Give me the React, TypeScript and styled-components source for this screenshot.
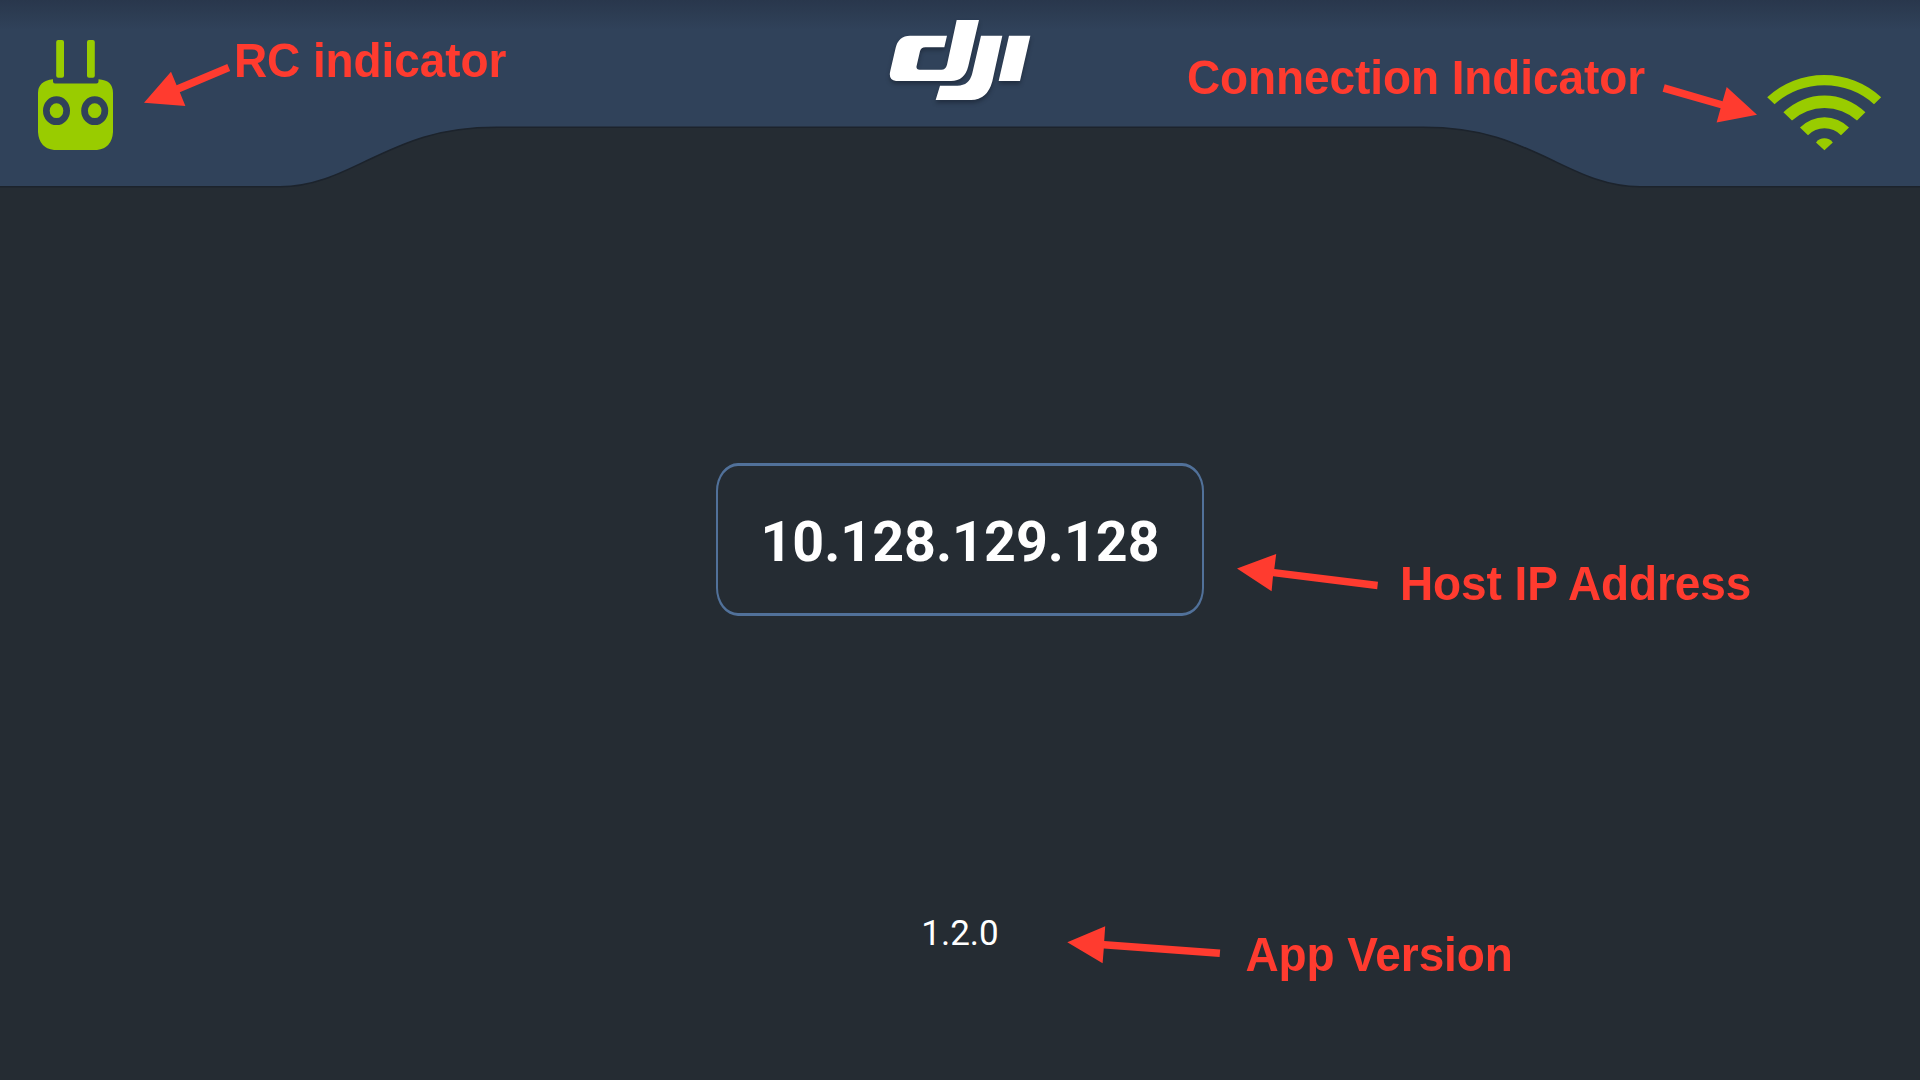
import React from 'react';
import styled, { createGlobalStyle } from 'styled-components';

const colors = {
  page: '#252c33',
  header: '#30425a',
  edge: '#1c232c',
  accent: '#99cc00',
  outline: '#51719a',
  note: '#ff3b2f',
};

const GlobalStyle = createGlobalStyle`
  * { box-sizing: border-box; }
  body { margin: 0; background: ${colors.page}; }
`;

const Screen = styled.div`
  position: relative;
  display: flex;
  flex-direction: column;
  width: 1920px;
  height: 1080px;
  overflow: hidden;
  background: ${colors.page};
  color: #fff;
  font-family: Roboto, sans-serif;
`;

const Header = styled.header`
  position: relative;
  display: grid;
  grid-template-columns: 1fr auto 1fr;
  align-items: start;
  height: 190px;
  padding: 0 37px;
`;

const HeaderShape = styled.svg`
  position: absolute;
  inset: 0;
  width: 1920px;
  height: 190px;
`;

const Slot = styled.div<{ $top: number; $end?: boolean }>`
  position: relative;
  display: flex;
  justify-content: ${(p) => (p.$end ? 'flex-end' : 'flex-start')};
  padding-top: ${(p) => p.$top}px;
`;

const Icon = styled.svg`
  display: block;
  overflow: visible;
`;

const Logo = styled(Icon)`
  filter: drop-shadow(0 3px 2px rgba(15, 22, 34, 0.45));
`;

const Main = styled.main`
  display: flex;
  flex-direction: column;
  align-items: center;
  padding-top: 273px;
`;

const AddressBox = styled.div`
  display: flex;
  align-items: center;
  justify-content: center;
  width: 488px;
  height: 153px;
  padding-top: 7px;
  border: solid ${colors.outline};
  border-width: 3px 2px;
  border-radius: 22px / 28px;
  font-size: 55.6px;
  font-weight: 700;
  line-height: 1;
`;

const Version = styled.div`
  margin-top: 300px;
  font-size: 35px;
  line-height: 36px;
`;

const Arrows = styled.svg`
  position: absolute;
  inset: 0;
  fill: ${colors.note};
`;

const Note = styled.span<{ $x: number; $y: number }>`
  position: absolute;
  left: ${(p) => p.$x}px;
  top: ${(p) => p.$y}px;
  color: ${colors.note};
  font: 700 46px/46px 'Liberation Sans', Arial, sans-serif;
  letter-spacing: -0.1px;
  white-space: pre;
  transform: scaleY(1.045);
  transform-origin: 0 0;
`;

const EDGE =
  'M-4 186.7H280C313 186.7 338 174.5 366 161C405 142.5 437 127.3 497 127.3H1423C1483 127.3 1515 142.5 1554 161C1582 174.5 1607 186.7 1640 186.7H1924';

function RemoteIcon() {
  return (
    <Icon width="77" height="111" viewBox="37 40 77 111" fill={colors.accent}>
      <rect x="56.2" y="40" width="7.8" height="37.8" rx="2" />
      <rect x="87" y="40" width="7.8" height="37.8" rx="2" />
      <path
        fillRule="evenodd"
        d="M53 79.2V81.5Q53 83.6 55 83.6H96.5Q98.5 83.6 98.5 81.5V79.2Q113 80 113 93V132Q112 148 97 150H54Q39 148 38 132V93Q38 81 53 79.2Z
        M43 110.7a13.5 14.4 0 1 0 27 0a13.5 14.4 0 1 0-27 0Z
        M81.2 110.7a13.5 14.4 0 1 0 27 0a13.5 14.4 0 1 0-27 0Z"
      />
      <ellipse cx="56.5" cy="110.7" rx="6.8" ry="7.4" />
      <ellipse cx="94.7" cy="110.7" rx="6.8" ry="7.4" />
    </Icon>
  );
}

function DjiLogo() {
  return (
    <Logo width="142" height="82" viewBox="57 60 426 246">
      <g fill="#fff">
        <path d="M260 60H327L295 198Q284 243 243 243H78Q54 240 61 212L77 143Q86 107 120 107H231L223 142H166Q153 142 150 154L140 197Q137 209 149 209H214Q227 209 231 194Z" />
        <path d="M333 107H397L367 244Q352 300 303 300H197L210 257H262Q298 257 307 219Z" />
        <path d="M417 107H481L450 243H386Z" />
      </g>
    </Logo>
  );
}

function WifiIcon() {
  return (
    <Icon width="116" height="76" viewBox="1767 75 116 76" fill={colors.accent}>
      <path d="M1767.2 97.3A84 84 0 0 1 1881.2 97.3L1874 104.2A74.3 74.3 0 0 0 1774.6 104.2Z" />
      <path d="M1783.4 112.3A58.7 58.7 0 0 1 1865.4 112.3L1857 120.5A48.6 48.6 0 0 0 1792 120.5Z" />
      <path d="M1800 127.5A34.5 34.5 0 0 1 1849 127.5L1841 135.2A23 23 0 0 0 1808 135.2Z" />
      <path d="M1816 142.4C1820 136.8 1828.8 136.8 1832.8 142.4L1824.4 150.2Z" />
    </Icon>
  );
}

export default function App() {
  return (
    <>
      <GlobalStyle />
      <Screen>
        <Header>
          <HeaderShape viewBox="0 0 1920 190">
            <defs>
              <linearGradient id="shade" x1="0" y1="0" x2="0" y2="30" gradientUnits="userSpaceOnUse">
                <stop offset="0" stopColor="#29374c" />
                <stop offset="1" stopColor={colors.header} />
              </linearGradient>
            </defs>
            <path d={`${EDGE}V-4H-4Z`} fill="url(#shade)" stroke={colors.edge} strokeWidth="1.6" />
          </HeaderShape>
          <Slot $top={40}><RemoteIcon /></Slot>
          <Slot $top={20}><DjiLogo /></Slot>
          <Slot $top={75} $end><WifiIcon /></Slot>
        </Header>
        <Main>
          <AddressBox>10.128.129.128</AddressBox>
          <Version>1.2.0</Version>
        </Main>
        <Arrows width="1920" height="1080" viewBox="0 0 1920 1080">
          <path d="M144 102.8L171 71.7L176.6 85.2L227.3 64L230.2 71L179.8 92.3L185.4 106Z" />
          <path d="M1757 114.7L1726.7 87L1722.6 101.2L1664.7 84.3L1662.6 91.8L1720.6 108.3L1716.6 122.4Z" />
          <path d="M1237 568.4L1276.2 554L1274.3 569L1378 581.8L1377.2 589.2L1273 576.3L1271.6 591.2Z" />
          <path d="M1067.3 942.3L1105.2 926.2L1104.2 941L1220.2 949.5L1219.6 957L1103.8 948.5L1102.6 963.3Z" />
        </Arrows>
        <Note $x={234} $y={35.7}>RC indicator</Note>
        <Note $x={1187} $y={52.7}>Connection Indicator</Note>
        <Note $x={1400} $y={558.7}>Host IP Address</Note>
        <Note $x={1245.5} $y={929.7}>App Version</Note>
      </Screen>
    </>
  );
}
